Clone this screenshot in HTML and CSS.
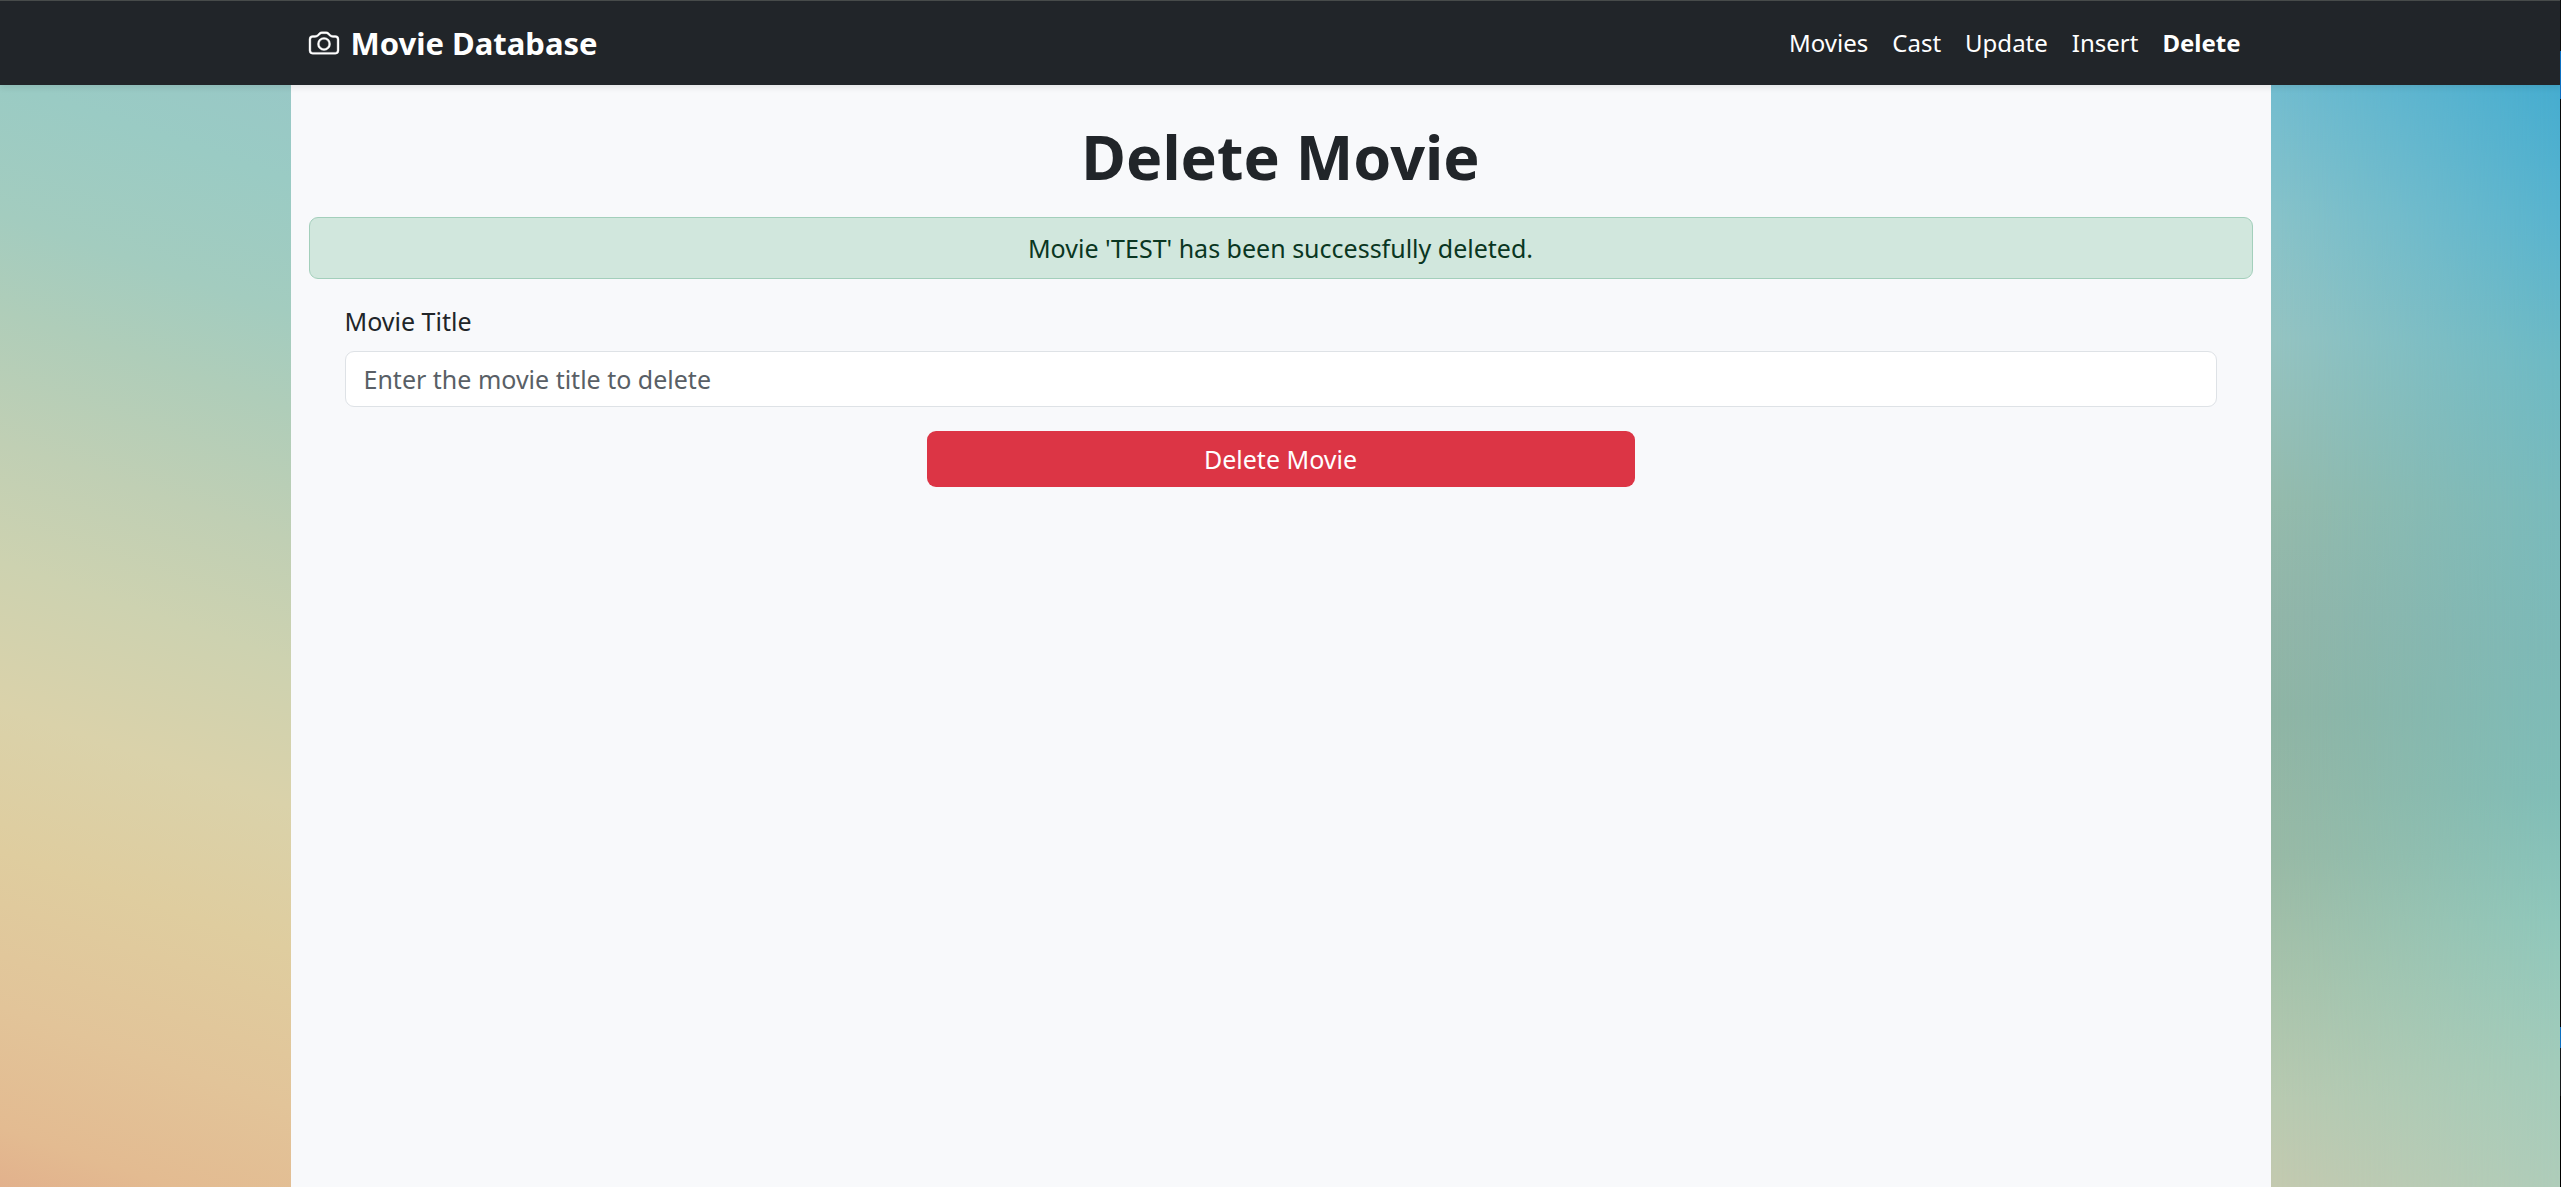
FILE: index.html
```html
<!DOCTYPE html>
<html lang="en">
<head>
<meta charset="utf-8">
<meta name="viewport" content="width=device-width, initial-scale=1">
<title>Delete Movie</title>
<link rel="stylesheet" href="styles.css">
</head>
<body>
<header class="navbar">
  <div class="navbar-inner">
    <a class="brand" href="#">
      <svg class="brand-icon" viewBox="0 0 16 16" fill="currentColor" aria-hidden="true"><path d="M15 12a1 1 0 0 1-1 1H2a1 1 0 0 1-1-1V6a1 1 0 0 1 1-1h1.172a3 3 0 0 0 2.12-.879l.83-.828A1 1 0 0 1 6.827 3h2.344a1 1 0 0 1 .707.293l.828.828A3 3 0 0 0 12.828 5H14a1 1 0 0 1 1 1zM2 4a2 2 0 0 0-2 2v6a2 2 0 0 0 2 2h12a2 2 0 0 0 2-2V6a2 2 0 0 0-2-2h-1.172a2 2 0 0 1-1.414-.586l-.828-.828A2 2 0 0 0 9.172 2H6.828a2 2 0 0 0-1.414.586l-.828.828A2 2 0 0 1 3.172 4z"/><path d="M8 11a2.500 2.500 0 1 1 0-5 2.500 2.500 0 0 1 0 5m0 1a3.500 3.500 0 1 0 0-7 3.500 3.500 0 0 0 0 7"/></svg>
      Movie Database
    </a>
    <nav class="nav">
      <a class="nav-link" href="#">Movies</a>
      <a class="nav-link" href="#">Cast</a>
      <a class="nav-link" href="#">Update</a>
      <a class="nav-link" href="#">Insert</a>
      <a class="nav-link active" href="#" aria-current="page">Delete</a>
    </nav>
  </div>
</header>
<div class="page">
  <div class="backdrop backdrop-start"></div>
  <main class="content">
    <h1 class="title">Delete Movie</h1>
    <div class="alert" role="alert">Movie 'TEST' has been successfully deleted.</div>
    <form class="form">
      <label class="label" for="title">Movie Title</label>
      <input class="input" type="text" id="title" placeholder="Enter the movie title to delete">
      <button class="button" type="button">Delete Movie</button>
    </form>
  </main>
  <div class="backdrop backdrop-end"></div>
</div>
</body>
</html>
```
FILE: styles.css
```css
* { box-sizing: border-box; }

body {
  position: relative;
  margin: 0;
  min-height: 100vh;
  display: flex;
  flex-direction: column;
  font: 25px/36px "Noto Sans", "Open Sans", sans-serif;
  color: #212529;
}

/* thin edge line over the right side of the window */
body::after {
  content: "";
  position: absolute;
  z-index: 2;
  inset: 0 0 0 auto;
  width: 1px;
  background: linear-gradient(#0b0d0e 51px, #0d6fc0 51px, #0d6fc0 99px, #08090a 99px, #08090a 1027px, #0d6fc0 1027px, #0d6fc0 1048px, #15191b 1048px, #15191b 1096px, #000000 1096px);
}

.navbar {
  position: relative;
  z-index: 1;
  padding: 12px 0;
  background: #212529;
  border-top: 1px solid #474b4a;
  box-shadow: 0 3px 6px rgba(0, 0, 0, 0.08);
}

.navbar-inner {
  max-width: 1980px;
  min-height: 60px;
  margin: 0 auto;
  padding: 0 18px;
  display: flex;
  align-items: center;
  justify-content: space-between;
}

.brand {
  display: flex;
  align-items: center;
  gap: 12px;
  font-size: 31px;
  font-weight: 700;
  color: #ffffff;
  text-decoration: none;
}

.brand-icon {
  width: 30px;
  height: 30px;
  overflow: visible;
  stroke: currentColor;
  stroke-width: 0.2;
}

.nav { display: flex; padding-right: 12px; gap: 24px; font-size: 24px; }

.nav-link { color: #ffffff; text-decoration: none; }

.active { font-weight: 700; }

.page {
  flex: 1;
  display: grid;
  grid-template-columns: 1fr minmax(0, 1980px) 1fr;
}

.backdrop { position: relative; }

.backdrop-start {
  background: linear-gradient(199deg, #98c8c6 0%, #9acbc4 8%, #a3ccbf 19%, #afcdb9 27%, #c0cfb4 38%, #cdd2b0 48%, #dad2aa 60%, #dfcd9f 72%, #e2c499 85%, #e3bb91 95%, #e2b18c 100%);
}

.backdrop-end {
  background: linear-gradient(#46add0, #58b4cf 12%, #6dbac5 25%, #79bbbd 38%, #7dbab8 51%, #80beb8 64%, #90c8bc 76%, #a3ccbb 89%, #afcdba);
}

/* fades a second set of tones in from the inner edge */
.backdrop-end::before {
  content: "";
  position: absolute;
  inset: 0;
  background: linear-gradient(#72bccf, #88c2c8 12%, #95c3c1 23%, #95baab 38%, #92b5a8 48%, #8fb4a4 57%, #98b9a5 70%, #a9c3ab 82%, #b8c9b0 92%, #c3c9af);
  mask-image: linear-gradient(to right, #000, transparent);
}

.content {
  padding: 36px 18px;
  background: #f8f9fb;
}

.title {
  margin: 0 0 24px;
  font-size: 61px;
  line-height: 72px;
  font-weight: 700;
  text-align: center;
}

.alert {
  padding: 12px 24px;
  border: 1px solid #a3cfbb;
  border-radius: 9px;
  background: #d1e7dd;
  color: #0a3622;
  text-align: center;
}

.form {
  padding: 24px 36px;
  display: flex;
  flex-direction: column;
}

.label { margin-bottom: 12px; }

.input {
  width: 100%;
  height: 56px;
  padding: 9px 18px;
  border: 1px solid #dee2e6;
  border-radius: 9px;
  background: #ffffff;
  color: #212529;
  font: inherit;
}

.input::placeholder { color: #595f66; opacity: 1; }

.button {
  width: 708px;
  max-width: 100%;
  height: 56px;
  margin: 24px auto 0;
  padding: 9px 18px;
  border: 0;
  border-radius: 9px;
  background: #dc3545;
  color: #ffffff;
  font: inherit;
}
```
